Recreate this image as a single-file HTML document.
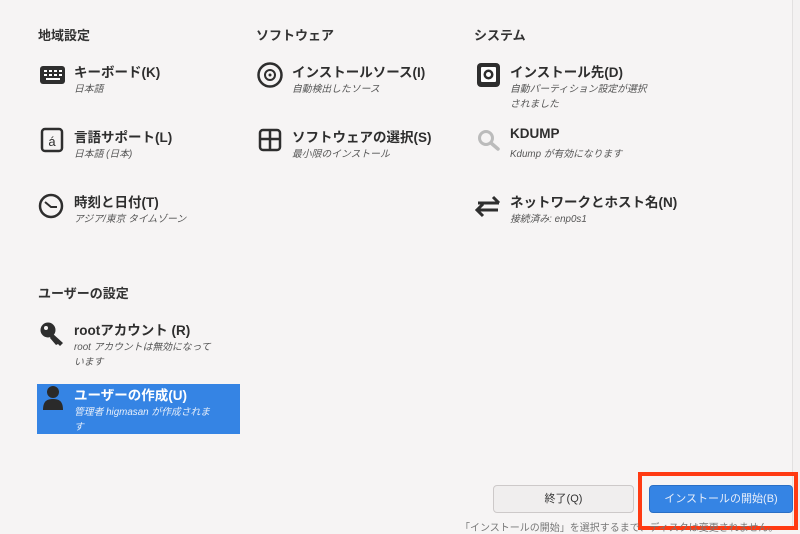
<!DOCTYPE html>
<html><head><meta charset="utf-8"><style>
*{margin:0;padding:0;box-sizing:border-box}
body{width:800px;height:528px;overflow:hidden;background:#f6f4f4;font-family:"Liberation Sans","Noto Sans CJK JP",sans-serif;color:#2e2e2e;position:relative}
.h{position:absolute;font-size:13px;font-weight:bold;color:#333}
.it{position:absolute}
.t{position:absolute;left:36px;top:-3px;font-size:13.5px;font-weight:bold;white-space:nowrap;color:#2e2e2e}
.s{position:absolute;left:36px;top:18px;font-size:9.8px;font-style:italic;color:#555;line-height:15px;width:142px}
.ic{position:absolute;left:0;top:-3px;width:28px;height:28px}
</style></head><body>
<div style="position:absolute;right:0;top:0;width:8px;height:528px;background:#f3f1f1;border-left:1px solid #e2e0e0"></div>
<div class="h" style="left:38px;top:25px">地域設定</div>
<div class="h" style="left:256px;top:25px">ソフトウェア</div>
<div class="h" style="left:474px;top:25px">システム</div>
<div class="h" style="left:38px;top:283px">ユーザーの設定</div>

<div class="it" style="left:38px;top:64px"><svg class="ic" viewBox="0 0 28 28"><rect x="2" y="5" width="25" height="18" rx="3" fill="#2e2e2e"/><g fill="#fff"><rect x="6" y="9" width="3" height="2"/><rect x="11" y="9" width="3" height="2"/><rect x="16" y="9" width="3" height="2"/><rect x="21" y="9" width="3" height="2"/><rect x="6" y="13" width="3" height="2"/><rect x="11" y="13" width="3" height="2"/><rect x="16" y="13" width="3" height="2"/><rect x="21" y="13" width="3" height="2"/><rect x="8" y="17" width="14" height="2"/></g></svg><div class="t">キーボード(K)</div><div class="s">日本語</div></div>
<div class="it" style="left:38px;top:129px"><svg class="ic" viewBox="0 0 28 28"><rect x="4" y="3" width="20" height="22" rx="3" fill="none" stroke="#2e2e2e" stroke-width="2.5"/><text x="14" y="20" font-size="13" text-anchor="middle" fill="#2e2e2e" font-family="Liberation Sans">á</text></svg><div class="t">言語サポート(L)</div><div class="s">日本語 (日本)</div></div>
<div class="it" style="left:38px;top:194px"><svg class="ic" viewBox="0 0 28 28"><circle cx="13" cy="15" r="11" fill="none" stroke="#2e2e2e" stroke-width="2.5"/><path d="M7 11 L13 16 L19 16" fill="none" stroke="#2e2e2e" stroke-width="2"/></svg><div class="t">時刻と日付(T)</div><div class="s">アジア/東京 タイムゾーン</div></div>

<div class="it" style="left:256px;top:64px"><svg class="ic" viewBox="0 0 28 28"><circle cx="14" cy="14" r="11.5" fill="none" stroke="#2e2e2e" stroke-width="2.5"/><circle cx="14" cy="14" r="5" fill="none" stroke="#2e2e2e" stroke-width="2"/><circle cx="14" cy="14" r="1.5" fill="#2e2e2e"/></svg><div class="t">インストールソース(I)</div><div class="s">自動検出したソース</div></div>
<div class="it" style="left:256px;top:129px"><svg class="ic" viewBox="0 0 28 28"><rect x="4" y="4" width="20" height="20" rx="3" fill="none" stroke="#2e2e2e" stroke-width="2.5"/><path d="M14 4V24M4 13H24" stroke="#2e2e2e" stroke-width="2.5"/></svg><div class="t">ソフトウェアの選択(S)</div><div class="s">最小限のインストール</div></div>

<div class="it" style="left:474px;top:64px"><svg class="ic" viewBox="0 0 28 28"><rect x="3" y="2" width="23" height="24" rx="4" fill="#2e2e2e"/><rect x="7" y="6" width="15" height="15" rx="1" fill="#fff"/><circle cx="14.5" cy="13.5" r="5" fill="#2e2e2e"/><circle cx="14.5" cy="13.5" r="2.5" fill="#fff"/></svg><div class="t">インストール先(D)</div><div class="s" style="width:138px">自動パーティション設定が選択されました</div></div>
<div class="it" style="left:474px;top:129px"><svg class="ic" viewBox="0 0 28 28"><circle cx="12" cy="12" r="6.5" fill="none" stroke="#bbb" stroke-width="3"/><path d="M17 17L24 23" stroke="#bbb" stroke-width="3.5" stroke-linecap="round"/></svg><div class="t">KDUMP</div><div class="s">Kdump が有効になります</div></div>
<div class="it" style="left:474px;top:194px"><svg class="ic" viewBox="0 0 28 28"><path d="M4 12H25M19 6L25 12M3 19H24M9 13L3 19L9 25" fill="none" stroke="#2e2e2e" stroke-width="3"/></svg><div class="t">ネットワークとホスト名(N)</div><div class="s">接続済み: enp0s1</div></div>

<div class="it" style="left:38px;top:322px"><svg class="ic" viewBox="0 0 28 28"><circle cx="10" cy="11" r="7.5" fill="#2e2e2e"/><circle cx="8" cy="9" r="2" fill="#f6f4f4"/><path d="M14 14L25 24L22 27L20 25L18 26L12 19Z" fill="#2e2e2e"/></svg><div class="t">rootアカウント (R)</div><div class="s">root アカウントは無効になっています</div></div>

<div style="position:absolute;left:37px;top:384px;width:203px;height:50px;background:#3584e4"></div>
<div class="it" style="left:38px;top:387px"><svg class="ic" viewBox="0 0 28 28"><circle cx="15" cy="8" r="6" fill="#2a2a2a"/><path d="M5 26C5 17 9 15 15 15C21 15 25 17 25 26Z" fill="#2a2a2a"/></svg><div class="t" style="color:#fff">ユーザーの作成(U)</div><div class="s" style="color:#e6eefa">管理者 higmasan が作成されます</div></div>

<div style="position:absolute;left:493px;top:485px;width:141px;height:28px;border:1px solid #cdc9c9;border-radius:4px;background:#f0eeee;text-align:center;line-height:26px;font-size:11px;color:#333">終了(Q)</div>
<div style="position:absolute;left:638px;top:472px;width:160px;height:58px;border:4px solid #ff3a12"></div>
<div style="position:absolute;left:649px;top:485px;width:144px;height:28px;border-radius:4px;background:#3584e4;border:1px solid #2a6fc5;text-align:center;line-height:26px;font-size:11px;color:#e8eefa">インストールの開始(B)</div>
<div style="position:absolute;left:460px;top:519px;font-size:10px;color:#777;white-space:nowrap">「インストールの開始」を選択するまで、ディスクは変更されません。</div>
</body></html>
